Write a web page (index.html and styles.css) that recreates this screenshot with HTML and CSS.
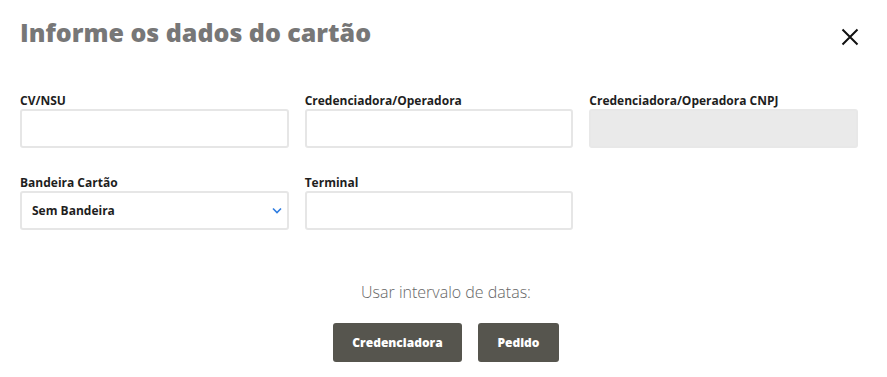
FILE: index.html
```html
<!DOCTYPE html>
<html lang="pt">
<head>
<meta charset="utf-8">
<link rel="stylesheet" href="styles.css">
</head>
<body>
<div class="modal">
  <div class="header">
    <h1 class="title">Informe os dados do cartão</h1>
    <button class="close" aria-label="Fechar">
      <svg width="18" height="18" viewBox="0 0 18 18"><path d="M1.5 1.5 L16.5 16.5 M16.5 1.5 L1.5 16.5" stroke="#111" stroke-width="2" fill="none"/></svg>
    </button>
  </div>
  <div class="grid">
    <div class="field">
      <label class="label">CV/NSU</label>
      <input class="input" type="text">
    </div>
    <div class="field">
      <label class="label">Credenciadora/Operadora</label>
      <input class="input" type="text">
    </div>
    <div class="field">
      <label class="label">Credenciadora/Operadora CNPJ</label>
      <input class="input disabled" type="text" disabled>
    </div>
    <div class="field">
      <label class="label">Bandeira Cartão</label>
      <div class="select">
        <span>Sem Bandeira</span>
        <svg width="10" height="7" viewBox="0 0 10 7"><path d="M1 1.5 L5 5.5 L9 1.5" stroke="#2f7de1" stroke-width="1.6" fill="none"/></svg>
      </div>
    </div>
    <div class="field">
      <label class="label">Terminal</label>
      <input class="input" type="text">
    </div>
  </div>
  <div class="footer">
    <p class="hint">Usar intervalo de datas:</p>
    <div class="buttons">
      <button class="btn btn-wide">Credenciadora</button>
      <button class="btn btn-narrow">Pedido</button>
    </div>
  </div>
</div>
</body>
</html>
```
FILE: styles.css
```css
* { box-sizing: border-box; }
html, body { margin: 0; padding: 0; background: #fff; }
body { font-family: "Open Sans", "Liberation Sans", sans-serif; color: #333; }
.modal { width: 887px; height: 377px; padding: 0 29px 0 20px; }
.header { display: flex; justify-content: space-between; align-items: flex-start; height: 92px; }
.title { margin: 15px 0 0; font-size: 25px; font-weight: 800; color: #777; letter-spacing: 0; line-height: 34px; }
.close { margin: 28px -1px 0 0; padding: 0; border: 0; background: none; width: 18px; height: 18px; display: flex; }
.grid { display: grid; grid-template-columns: repeat(3, 1fr); column-gap: 16px; row-gap: 26px; }
.field { display: flex; flex-direction: column; }
.label { font-size: 12px; font-weight: 700; color: #1e1e1e; line-height: 17px; margin-bottom: 0; }
.input { width: 100%; height: 39px; border: 2px solid #e6e6e6; border-radius: 3px; background: #fff; font: inherit; outline: none; }
.input.disabled { background: #eaeaea; border-color: #e8e8e8; }
.select { height: 39px; border: 2px solid #e6e6e6; border-radius: 3px; display: flex; align-items: center; justify-content: space-between; padding: 0 5px 0 10px; font-size: 12px; font-weight: 700; color: #1e1e1e; }
.footer { margin: 51px -29px 0 -20px; padding-left: 5px; display: flex; flex-direction: column; align-items: center; }
.hint { margin: 0; font-size: 16px; font-weight: 300; color: #666; line-height: 22px; }
.buttons { display: flex; gap: 16px; margin-top: 20px; }
.btn { height: 39px; border: 0; border-radius: 3px; background: #56554e; color: #fff; font-family: inherit; font-size: 12px; font-weight: 800; padding: 0; }
.btn-wide { width: 129px; }
.btn-narrow { width: 81px; }
```
